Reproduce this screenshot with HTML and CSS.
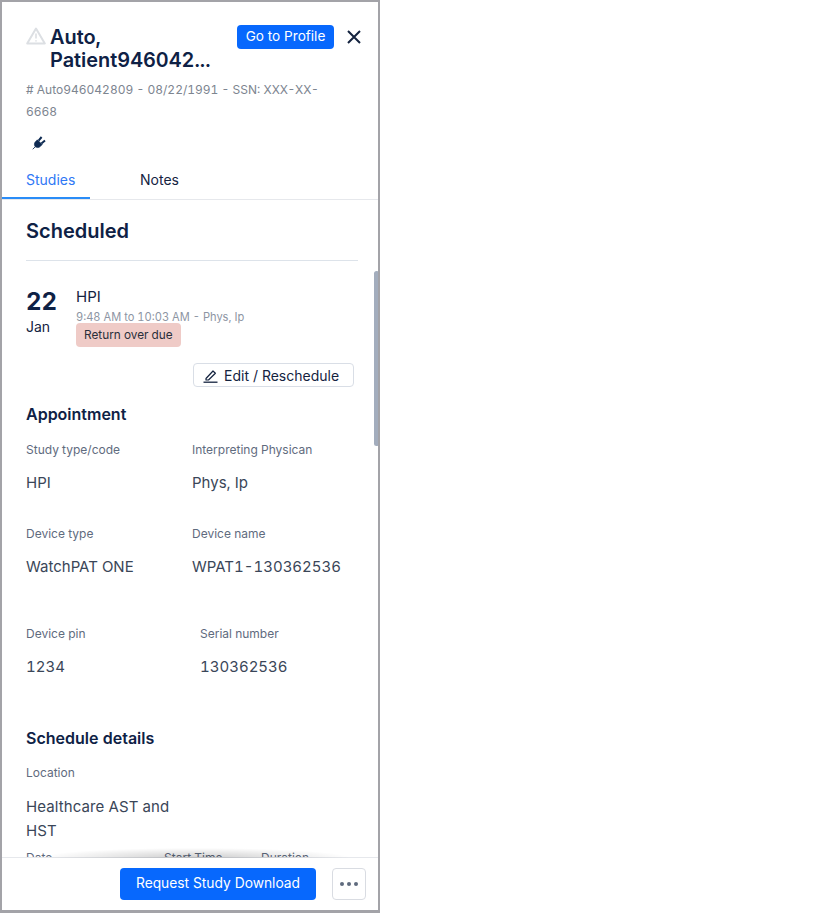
FILE: index.html
```html
<!DOCTYPE html>
<html lang="en">
<head>
    <meta charset="UTF-8">
    <title>Patient details</title>
    <link rel="stylesheet" href="styles.css">
</head>
<body>
    <div class="panel">
        <div class="header">
            <div class="title-row">
                <svg class="warn-icon" width="20" height="18" viewBox="0 0 20 18">
                    <path d="M10 1.5 L18.8 16.5 H1.2 Z" fill="none" stroke="#dcdfe3" stroke-width="2" stroke-linejoin="round"/>
                    <path d="M10 6.5 V11.5 M10 13.2 V14.4" stroke="#dcdfe3" stroke-width="1.6"/>
                </svg>
                <h1 class="patient-name">Auto,<br>Patient946042...</h1>
                <button class="btn-profile">Go to Profile</button>
                <svg class="close-icon" width="16" height="16" viewBox="0 0 16 16">
                    <path d="M2 2 L14 14 M14 2 L2 14" stroke="#14233f" stroke-width="2"/>
                </svg>
            </div>
            <p class="patient-meta"># Auto946042809 - 08/22/1991 - SSN: XXX-XX-<br>6668</p>
            <svg class="plug-icon" width="14" height="14" viewBox="0 0 14 14">
                <path d="M0.8 13.2 L3.2 10.8 C2 9 2.2 7 3.4 5.8 L5.4 3.8 L10.2 8.6 L8.2 10.6 C7 11.8 5 12 3.2 10.8 Z" fill="#0e2a52" stroke="#0e2a52" stroke-width="0.6"/>
                <path d="M6.6 4.6 L9.6 1 M9.4 7.4 L13 4.4" stroke="#0e2a52" stroke-width="2"/>
            </svg>
        </div>
        <div class="tabs">
            <div class="tab tab-active">Studies</div>
            <div class="tab">Notes</div>
        </div>
        <div class="content">
            <h2 class="section-title">Scheduled</h2>
            <div class="appt">
                <div class="appt-date">
                    <div class="day">22</div>
                    <div class="month">Jan</div>
                </div>
                <div class="appt-info">
                    <div class="appt-type">HPI</div>
                    <div class="appt-time">9:48 AM to 10:03 AM - Phys, Ip</div>
                    <span class="badge">Return over due</span>
                </div>
            </div>
            <div class="edit-row">
                <button class="btn-edit">
                    <svg width="15" height="15" viewBox="0 0 15 15">
                        <path d="M3 10.5 L10 3 L12.4 5.2 L5.5 12 H3 Z" fill="none" stroke="#14233f" stroke-width="1.2" stroke-linejoin="round"/>
                        <path d="M0.5 14.2 H14.5" stroke="#14233f" stroke-width="1.3"/>
                    </svg>
                    Edit / Reschedule
                </button>
            </div>
            <h3 class="sub-title">Appointment</h3>
            <div class="field-row">
                <div class="field"><div class="label">Study type/code</div><div class="value">HPI</div></div>
                <div class="field"><div class="label">Interpreting Physican</div><div class="value">Phys, Ip</div></div>
            </div>
            <div class="field-row">
                <div class="field"><div class="label">Device type</div><div class="value">WatchPAT ONE</div></div>
                <div class="field"><div class="label">Device name</div><div class="value">WPAT1-130362536</div></div>
            </div>
            <div class="field-row field-row-wide">
                <div class="field"><div class="label">Device pin</div><div class="value">1234</div></div>
                <div class="field"><div class="label">Serial number</div><div class="value">130362536</div></div>
            </div>
            <h3 class="sub-title schedule-title">Schedule details</h3>
            <div class="label">Location</div>
            <div class="value location">Healthcare AST and HST</div>
            <div class="date-row">
                <div class="label date-col">Date</div>
                <div class="label time-col">Start Time</div>
                <div class="label">Duration</div>
            </div>
        </div>
        <div class="footer">
            <button class="btn-download">Request Study Download</button>
            <button class="btn-more"><span></span><span></span><span></span></button>
        </div>
        <div class="scroll-thumb"></div>
    </div>
</body>
</html>
```

FILE: styles.css
```css
body {
    margin: 0;
    font-family: 'Inter', 'Roboto', sans-serif;
    font-variant-numeric: tabular-nums;
    background-color: #fff;
    color: #14233f;
}
button {
    font-family: inherit;
    cursor: pointer;
}
.panel {
    position: relative;
    width: 380px;
    height: 913px;
    box-sizing: border-box;
    border: 2px solid #a3a3a8;
    border-bottom-width: 3px;
    display: flex;
    flex-direction: column;
    overflow: hidden;
}
.header {
    padding: 22px 0 0 24px;
}
.title-row {
    display: flex;
    align-items: flex-start;
}
.warn-icon {
    margin: 3px 4px 0 0;
    flex: none;
}
.patient-name {
    margin: 2px 0 0;
    width: 187px;
    font-size: 19.9px;
    font-weight: 600;
    line-height: 23px;
    color: #0e2145;
}
.btn-profile {
    background-color: #0768fd;
    color: #fff;
    border: none;
    border-radius: 4px;
    width: 97px;
    height: 24px;
    padding: 0 0 2px;
    font-size: 13.6px;
    margin-top: 1px;
}
.close-icon {
    margin: 5px 0 0 12px;
}
.patient-meta {
    margin: 7px 0 0;
    font-size: 12px;
    line-height: 22px;
    color: #7d8590;
}
.plug-icon {
    display: block;
    margin: 13px 0 0 6px;
}
.tabs {
    display: flex;
    margin-top: 15px;
    height: 34px;
    border-bottom: 1px solid #e6e8ec;
    font-size: 14px;
    flex: none;
}
.tab {
    width: 88px;
    padding-left: 24px;
    box-sizing: border-box;
    line-height: 29px;
    color: #14233f;
}
.tab + .tab {
    padding-left: 50px;
    width: 140px;
}
.tab-active {
    color: #2f78f5;
    border-bottom: 2px solid #2a8cf7;
    height: 34px;
}
.content {
    flex: 1;
    overflow: hidden;
    padding: 0 20px 0 24px;
}
.section-title {
    margin: 19px 0 0;
    padding-bottom: 16px;
    border-bottom: 1px solid #dde3ea;
    font-size: 20px;
    line-height: 25px;
    font-weight: 600;
    color: #0e2145;
}
.appt {
    display: flex;
    margin-top: 25px;
}
.appt-date {
    width: 50px;
}
.day {
    font-size: 24px;
    line-height: 32px;
    font-weight: 700;
    color: #0e2145;
}
.month {
    font-size: 14px;
    line-height: 20px;
    margin-top: -1px;
}
.appt-type {
    font-size: 15px;
    line-height: 22px;
}
.appt-time {
    font-size: 11.1px;
    line-height: 18px;
    color: #8d95a3;
}
.badge {
    display: block;
    width: fit-content;
    background-color: #efcbc7;
    border-radius: 4px;
    margin-top: -3px;
    padding: 0 8px;
    height: 24px;
    font-size: 11.8px;
    line-height: 24px;
    color: #2a2f3a;
}
.edit-row {
    display: flex;
    justify-content: flex-end;
    margin-top: 16px;
    padding-right: 4px;
}
.btn-edit {
    display: flex;
    align-items: center;
    gap: 6px;
    width: 161px;
    height: 24px;
    padding: 0 0 0 9px;
    background-color: #fff;
    border: 1px solid #d9dee6;
    border-radius: 4px;
    font-size: 14px;
    color: #14233f;
}
.sub-title {
    margin: 17px 0 0;
    font-size: 16px;
    line-height: 20px;
    font-weight: 600;
    color: #0e2145;
}
.field-row {
    display: grid;
    grid-template-columns: 166px 1fr;
    margin-top: 17px;
    height: 67px;
}
.field-row-wide {
    grid-template-columns: 174px 1fr;
    margin-top: 33px;
}
.label {
    font-size: 12px;
    line-height: 18px;
    color: #5f6b7e;
}
.value {
    margin-top: 12px;
    font-size: 15px;
    line-height: 24px;
    color: #3a4658;
}
.schedule-title {
    margin-top: 36px;
}
.schedule-title + .label {
    margin-top: 16px;
}
.location {
    width: 160px;
    margin-top: 13px;
    letter-spacing: 0.1px;
}
.date-row {
    display: flex;
    margin-top: 6px;
}
.date-col {
    width: 138px;
}
.time-col {
    width: 97px;
}
.footer {
    position: relative;
    flex: none;
    height: 52px;
    display: flex;
    align-items: center;
    justify-content: flex-end;
    gap: 16px;
    padding: 0 12px 0 0;
    background-color: #fff;
    border-top: 1px solid #e6e8ec;
}
.footer::before {
    content: "";
    position: absolute;
    left: 40px;
    right: 30px;
    top: -10px;
    height: 10px;
    background: radial-gradient(ellipse at 50% 100%, rgba(0, 0, 0, 0.2), rgba(0, 0, 0, 0) 72%);
}
.btn-download {
    width: 196px;
    height: 32px;
    padding: 0 0 2px;
    border: none;
    border-radius: 4px;
    background-color: #0768fd;
    color: #fff;
    font-size: 13.8px;
}
.btn-more {
    display: flex;
    align-items: center;
    justify-content: center;
    gap: 3px;
    width: 34px;
    height: 32px;
    padding: 0;
    background-color: #fff;
    border: 1px solid #d9dce2;
    border-radius: 4px;
}
.btn-more span {
    width: 4px;
    height: 4px;
    border-radius: 50%;
    background-color: #5f6b7e;
}
.scroll-thumb {
    position: absolute;
    right: -1px;
    top: 269px;
    width: 5px;
    height: 175px;
    border-radius: 3px;
    background-color: #a3adbd;
}
```
